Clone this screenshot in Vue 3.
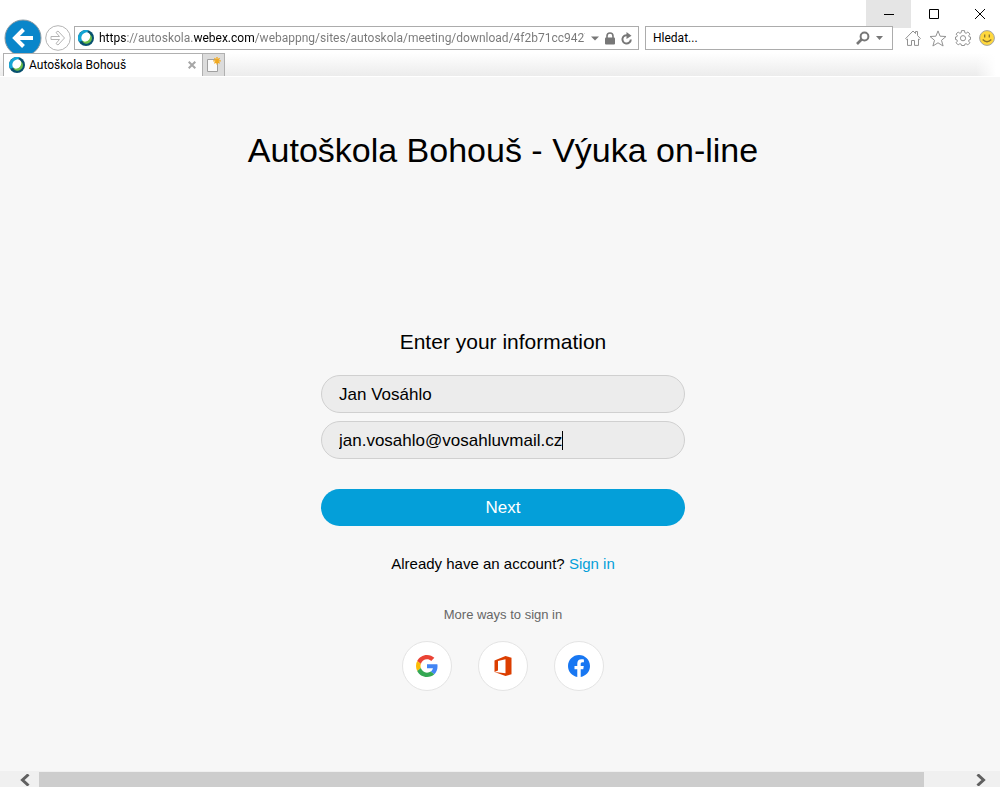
<script setup>
import { ref } from 'vue'

const address = ref('https://autoskola.webex.com/webappng/sites/autoskola/meeting/download/4f2b71cc9427.')
const search = ref('')
const name = ref('Jan Vosáhlo')
const email = ref('jan.vosahlo@vosahluvmail.cz')
</script>

<template>
  <div class="window">
    <header class="chrome">
      <div class="caption">
        <button class="cap min" aria-label="Minimize">
          <svg width="12" height="12" viewBox="0 0 12 12"><path d="M1 6.500h10" /></svg>
        </button>
        <button class="cap" aria-label="Maximize">
          <svg width="12" height="12" viewBox="0 0 12 12"><path d="M1.500 1.500h9v9h-9z" /></svg>
        </button>
        <button class="cap" aria-label="Close">
          <svg width="12" height="12" viewBox="0 0 12 12"><path d="M1 1l10 10M11 1L1 11" /></svg>
        </button>
      </div>

      <div class="nav">
        <button class="back" aria-label="Back">
          <svg width="38" height="38" viewBox="0 0 38 38">
            <circle cx="19" cy="19" r="18" fill="#0a86ca" stroke="#8b9aa3" />
            <path d="M29 19H12M19.500 10.500L11 19L19.500 27.500" fill="none" stroke="#fff" stroke-width="4" />
          </svg>
        </button>
        <button class="forward" aria-label="Forward">
          <svg width="26" height="26" viewBox="0 0 26 26">
            <circle cx="13" cy="13" r="12.300" fill="#fff" stroke="#b4b4b4" />
            <path d="M6 11.500h8.500L11 7.500l2-1.500 6.500 7-6.500 7-2-1.500 3.500-4H6z" fill="#fff" stroke="#b4b4b4" stroke-linejoin="round" />
          </svg>
        </button>

        <div class="field address">
          <svg class="globe" width="16" height="16" viewBox="0 0 16 16">
            <circle cx="8" cy="8" r="8" fill="#07506f" />
            <path d="M1 11.800A8 8 0 0 1 10.500 .4L8 4L4 11z" fill="#14a5d4" />
            <ellipse cx="9" cy="8.800" rx="4.700" ry="5.300" transform="rotate(40 9 8.800)" fill="#6cc04a" />
            <ellipse cx="7.800" cy="7" rx="4.100" ry="5" transform="rotate(40 7.800 7)" fill="#fff" />
          </svg>
          <input v-model="address" class="url" type="text" aria-label="Address" spellcheck="false" />
          <button class="tool" aria-label="Show addresses">
            <svg width="8" height="5" viewBox="0 0 8 5"><path d="M0 .5h8L4 4.500z" fill="#777" /></svg>
          </button>
          <button class="tool" aria-label="Security report">
            <svg width="10" height="13" viewBox="0 0 10 13">
              <rect y="5.500" width="10" height="7" rx="1" fill="#777" />
              <path d="M2 6V4a3 3 0 0 1 6 0v2" fill="none" stroke="#777" stroke-width="1.600" />
            </svg>
          </button>
          <button class="tool" aria-label="Refresh">
            <svg width="12" height="13" viewBox="0 0 12 13">
              <path d="M9.800 7.500A4.200 4.200 0 1 1 7 3.400" fill="none" stroke="#777" stroke-width="2" />
              <path d="M5.500 0l5 3.700-5 3.300z" fill="#777" />
            </svg>
          </button>
        </div>

        <div class="field search">
          <input v-model="search" type="text" placeholder="Hledat..." aria-label="Hledat" />
          <button class="tool" aria-label="Search">
            <svg width="14" height="14" viewBox="0 0 14 14" fill="none" stroke="#777">
              <circle cx="8.500" cy="5.500" r="3.900" stroke-width="2" />
              <path d="M5.500 8.500L1 13" stroke-width="2.600" />
            </svg>
          </button>
          <button class="tool" aria-label="Search providers">
            <svg width="7" height="4" viewBox="0 0 7 4"><path d="M0 0h7L3.500 4z" fill="#777" /></svg>
          </button>
        </div>

        <div class="tools">
          <button aria-label="Home">
            <svg width="16" height="16" viewBox="0 0 16 16" class="line">
              <path d="M.7 8.500L8 1l2.500 2.500V1.500h2v4l2.900 3-1 1L13.500 9v6.400h-4V10.500h-3v4.900h-4V9l-.8.600z" />
            </svg>
          </button>
          <button aria-label="Favorites">
            <svg width="18" height="17" viewBox="0 0 18 17" class="line">
              <path d="M9 .9l2.100 5.300 5.900.3-4.500 3.800 1.600 5.700L9 12.800 3.900 16l1.600-5.700L1 6.500l5.900-.3z" />
            </svg>
          </button>
          <button aria-label="Tools">
            <svg width="16" height="16" viewBox="0 0 16 16" class="line">
              <path d="M6.500.6h3l.3 2.100 1.300.6L12.900 2 15 4.100l-1.300 1.700.5 1 1.300.2v2.500l-1.400.3-.5 1.300 1.300 1.700-2.100 2.100-1.700-1.200-1.300.5-.3 1.300h-3l-.3-1.300-1.300-.5-1.700 1.200-2.100-2.100 1.300-1.700-.5-1.300L.5 9.500V7l1.400-.3.5-1L1.100 4.100 3.200 2l1.700 1.300 1.300-.6z" />
              <circle cx="8" cy="8.200" r="2.600" />
            </svg>
          </button>
          <button aria-label="Feedback">
            <svg width="16" height="16" viewBox="0 0 16 16">
              <circle cx="8" cy="8" r="7.400" fill="#ffd83d" stroke="#a5a5a5" />
              <path d="M5.700 4.500v3M10.300 4.500v3M3.700 9.500Q8 14 12.300 9.500" fill="none" stroke="#8a7430" stroke-width="1.300" />
            </svg>
          </button>
        </div>
      </div>

      <div class="tabs">
        <div class="tab">
          <svg width="16" height="16" viewBox="0 0 16 16">
            <circle cx="8" cy="8" r="8" fill="#07506f" />
            <path d="M1 11.800A8 8 0 0 1 10.500 .4L8 4L4 11z" fill="#14a5d4" />
            <ellipse cx="9" cy="8.800" rx="4.700" ry="5.300" transform="rotate(40 9 8.800)" fill="#6cc04a" />
            <ellipse cx="7.800" cy="7" rx="4.100" ry="5" transform="rotate(40 7.800 7)" fill="#fff" />
          </svg>
          <span class="tab-title">Autoškola Bohouš</span>
          <button class="tab-close" aria-label="Close tab">
            <svg width="8" height="8" viewBox="0 0 8 8"><path d="M.7.7l6.600 6.600M7.300.7L.7 7.300" stroke="#a6a6a6" stroke-width="2" /></svg>
          </button>
        </div>
        <button class="new-tab" aria-label="New tab">
          <svg width="15" height="16" viewBox="0 0 15 16">
            <path d="M1.500 2.500h10v12h-10z" fill="#fafafa" stroke="#a0a0a0" />
            <path d="M11 0v7.600M7.200 3.800h7.600M8.400 1.200l5.200 5.200M13.600 1.200L8.400 6.400" stroke="#f2a91e" stroke-width="1.300" />
          </svg>
        </button>
      </div>
    </header>

    <main class="page">
      <h1>Autoškola Bohouš - Výuka on-line</h1>
      <form class="form" @submit.prevent>
        <h2>Enter your information</h2>
        <div class="pill-wrap">
          <input v-model="name" class="pill" type="text" aria-label="Name" />
        </div>
        <div class="pill-wrap">
          <input v-model="email" class="pill" type="text" aria-label="Email" />
          <i class="caret"></i>
        </div>
        <button class="next" type="submit">Next</button>
      </form>
      <p class="account">Already have an account? <a href="#">Sign in</a></p>
      <p class="more">More ways to sign in</p>
      <div class="providers">
        <button aria-label="Google">
          <svg width="22" height="22" viewBox="0 0 48 48">
            <path fill="#EA4335" d="M24 9.500c3.540 0 6.710 1.220 9.210 3.600l6.850-6.850C35.900 2.380 30.470 0 24 0 14.620 0 6.510 5.380 2.560 13.220l7.980 6.190C12.430 13.720 17.740 9.500 24 9.500z" />
            <path fill="#4285F4" d="M46.980 24.550c0-1.570-.15-3.090-.38-4.550H24v9.020h12.940c-.58 2.960-2.260 5.480-4.780 7.180l7.730 6c4.510-4.180 7.090-10.360 7.090-17.650z" />
            <path fill="#FBBC05" d="M10.530 28.590c-.48-1.450-.76-2.990-.76-4.590s.27-3.140.76-4.590l-7.980-6.190C.92 16.460 0 20.120 0 24s.92 7.540 2.560 10.780l7.970-6.190z" />
            <path fill="#34A853" d="M24 48c6.480 0 11.930-2.130 15.890-5.810l-7.730-6c-2.150 1.450-4.920 2.300-8.160 2.300-6.260 0-11.570-4.220-13.470-9.910l-7.980 6.190C6.510 42.620 14.620 48 24 48z" />
          </svg>
        </button>
        <button aria-label="Office 365">
          <svg width="22" height="22" viewBox="0 0 22 22">
            <path fill="#dc3e00" d="M2.500 5.500L13.500 1l6 1.800v16.500L13.500 21 2.500 17l11 1.300V4.200L6 6v9.500L2.500 17z" />
          </svg>
        </button>
        <button aria-label="Facebook">
          <svg width="22" height="22" viewBox="0 0 24 24">
            <path fill="#1877f2" d="M24 12.073c0-6.627-5.373-12-12-12s-12 5.373-12 12c0 5.990 4.388 10.954 10.125 11.854v-8.385H7.078v-3.470h3.047V9.430c0-3.007 1.792-4.669 4.533-4.669 1.312 0 2.686.235 2.686.235v2.953H15.830c-1.491 0-1.956.925-1.956 1.874v2.250h3.328l-.532 3.470h-2.796v8.385C19.612 23.027 24 18.062 24 12.073z" />
          </svg>
        </button>
      </div>
    </main>

    <div class="scrollbar">
      <button aria-label="Scroll left">
        <svg width="10" height="12" viewBox="0 0 10 12"><path d="M8.500 .5L2.500 6l6 5.500" /></svg>
      </button>
      <div class="track"><div class="thumb"></div></div>
      <button aria-label="Scroll right">
        <svg width="10" height="12" viewBox="0 0 10 12"><path d="M1.500 .5l6 5.500-6 5.500" /></svg>
      </button>
    </div>
  </div>
</template>

<style>
body {
  margin: 0;
  overflow: hidden;
}
</style>

<style scoped>
* {
  box-sizing: border-box;
}
button {
  display: flex;
  align-items: center;
  justify-content: center;
  padding: 0;
  border: 0;
  background: none;
  font: inherit;
  flex: none;
}
svg {
  display: block;
  flex: none;
}
.window {
  display: flex;
  flex-direction: column;
  height: 100vh;
  background: #f7f7f7;
  font-family: "Liberation Sans", Arial, sans-serif;
  color: #000;
}
.chrome {
  background: #fff;
  font-family: Roboto, "Open Sans", sans-serif;
  font-size: 12px;
}
.caption {
  display: flex;
  justify-content: flex-end;
  height: 26px;
  margin-right: -3px;
}
.cap {
  width: 46px;
  height: 28px;
}
.cap svg {
  fill: none;
  stroke: #000;
}
.min {
  width: 45px;
  background: #e5e5e5;
}
.nav {
  position: relative;
  z-index: 1;
  display: flex;
  align-items: center;
  height: 24px;
  padding: 0 5px 0 4px;
}
.forward {
  margin: 0 3px;
}
.field {
  display: flex;
  align-items: center;
  height: 24px;
  border: 1px solid #acacac;
  background: #fff;
}
.field input {
  flex: 1;
  min-width: 0;
  height: 22px;
  padding: 0;
  border: 0;
  outline: 0;
  background: none;
  font: inherit;
}
.address {
  flex: 1;
  gap: 6px;
  padding: 0 5px 0 3px;
}
.address .globe {
  margin-right: -1px;
}
.address .url {
  color: transparent;
  background: linear-gradient(90deg, #000 28px, #777 28px, #777 94px, #000 94px, #000 155px, #777 155px);
  -webkit-background-clip: text;
  background-clip: text;
}
.search {
  width: 248px;
  gap: 6px;
  margin-left: 6px;
  padding: 0 9px 0 7px;
}
.search input::placeholder {
  color: #000;
  opacity: 1;
}
.tools {
  display: flex;
  align-items: center;
  gap: 8px;
  margin-left: 12px;
}
.line {
  fill: #fff;
  stroke: #929292;
  stroke-linejoin: round;
}
.tabs {
  display: flex;
  height: 27px;
  padding: 3px 0 0 3px;
  border-bottom: 1px solid #fff;
  background: linear-gradient(270deg, #fff 4px, transparent 24px), linear-gradient(#fff 3px, #ececec 26px);
}
.tab {
  position: relative;
  z-index: 2;
  display: flex;
  align-items: center;
  gap: 4px;
  width: 199px;
  padding: 0 6px 0 5px;
  border: 1px solid #b0b0b0;
  border-width: 1px 0 0 1px;
  background: #fff;
}
.tab-title {
  flex: 1;
  white-space: nowrap;
}
.new-tab {
  width: 23px;
  border: 1px solid #b0b0b0;
  border-bottom: 0;
  background: #dcdcdc;
}
.page {
  flex: 1;
  display: flex;
  flex-direction: column;
  align-items: center;
  padding-left: 6px;
}
h1 {
  margin: 53px 0 0;
  font-size: 34px;
  line-height: 40px;
  font-weight: 400;
}
.form {
  display: flex;
  flex-direction: column;
  width: 364px;
  max-width: 100%;
  margin-top: 160px;
}
h2 {
  margin: 0 0 21px;
  font-size: 21px;
  line-height: 24px;
  font-weight: 400;
  text-align: center;
}
.pill-wrap {
  position: relative;
  margin-bottom: 8px;
}
.pill {
  display: block;
  width: 100%;
  height: 38px;
  padding: 2px 17px 0;
  border: 1px solid #d0d0d0;
  border-radius: 19px;
  outline: 0;
  background: #ececec;
  color: #000;
  font: 17px "Liberation Sans", Arial, sans-serif;
}
.caret {
  position: absolute;
  left: 241px;
  top: 10px;
  width: 1px;
  height: 19px;
  background: #000;
}
.next {
  height: 37px;
  margin-top: 22px;
  border-radius: 19px;
  background: #049fd9;
  color: #fff;
  font-size: 17px;
}
.account {
  margin: 28px 0 0;
  font-size: 15px;
  line-height: 20px;
}
.account a {
  color: #049fd9;
  text-decoration: none;
}
.more {
  margin: 33px 0 0;
  color: #666;
  font-size: 13px;
  line-height: 16px;
}
.providers {
  display: flex;
  gap: 26px;
  margin-top: 18px;
}
.providers button {
  width: 50px;
  height: 50px;
  border: 1px solid #e4e4e4;
  border-radius: 50%;
  background: #fff;
}
.scrollbar {
  display: flex;
  height: 16px;
  padding-left: 11px;
  background: #f0f0f0;
}
.scrollbar button {
  width: 28px;
  padding-top: 2px;
}
.scrollbar button:last-child {
  width: 39px;
}
.scrollbar path {
  fill: none;
  stroke: #606060;
  stroke-width: 3;
}
.track {
  flex: 1;
  padding-top: 1px;
}
.thumb {
  width: 96%;
  height: 15px;
  background: #cdcdcd;
}
</style>
